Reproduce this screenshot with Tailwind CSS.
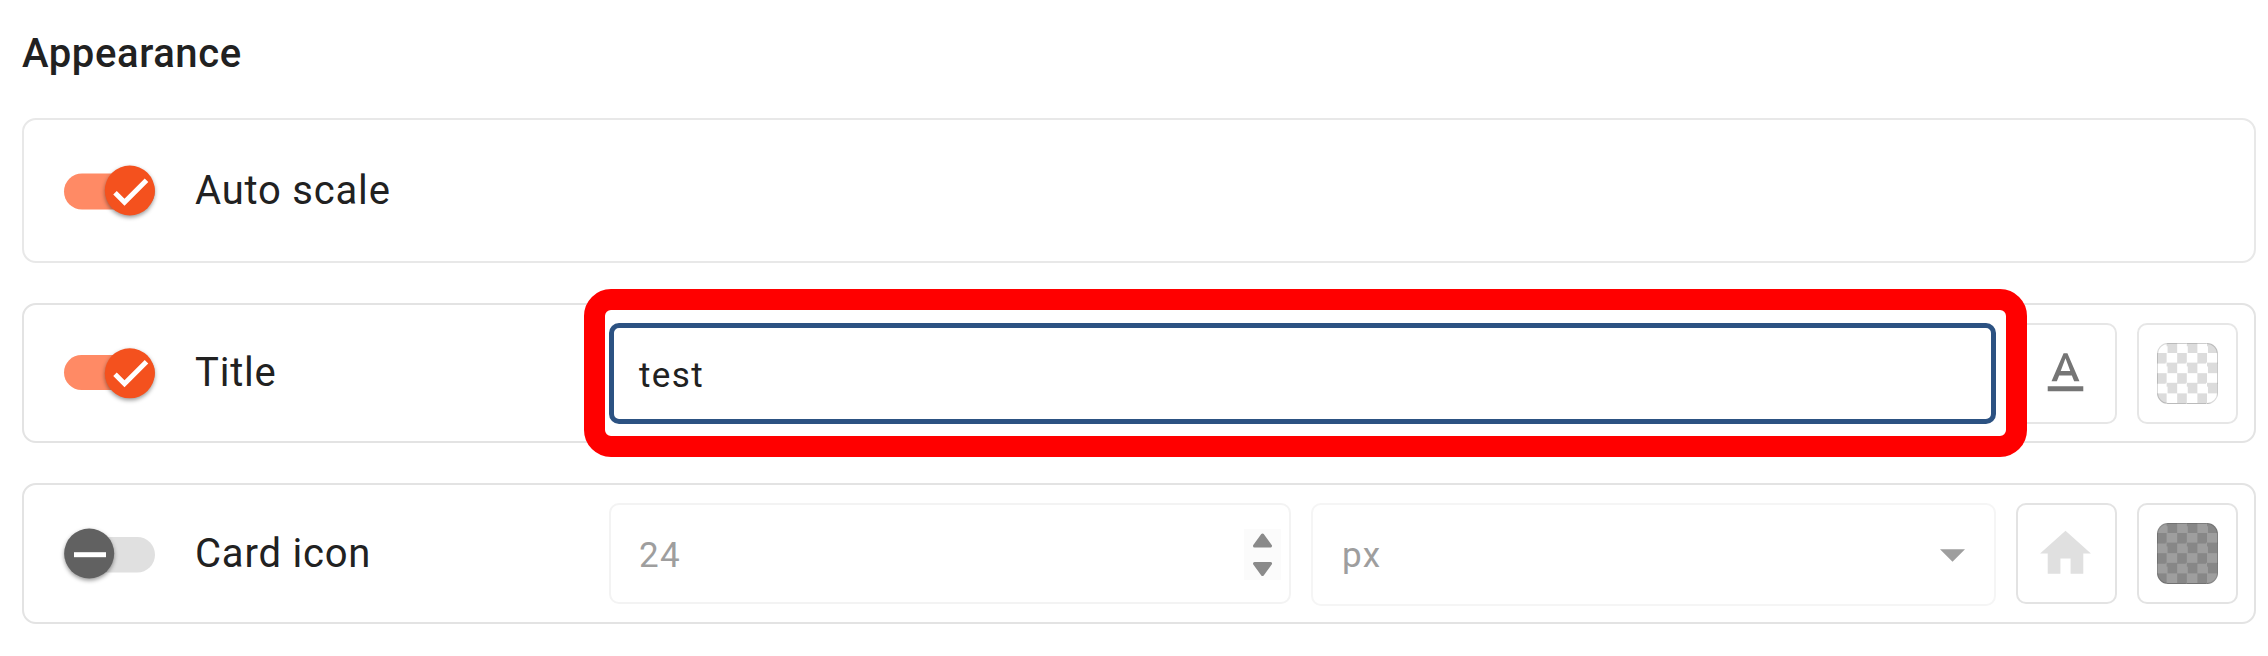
<!DOCTYPE html>
<html lang="en">
<head>
<meta charset="utf-8">
<title>Appearance</title>
<script src="https://cdn.jsdelivr.net/npm/@tailwindcss/browser@4"></script>
</head>
<body class="h-[656px] w-[2268px] overflow-hidden bg-white pl-[22px] font-[Roboto,sans-serif] text-[#212121]">
<h1 class="h-[118px] pt-[30px] text-[40px] leading-[47px] font-medium tracking-[0.6px]">Appearance</h1>
<main class="flex w-[2234px] flex-col">
  <section class="flex h-[145px] items-center rounded-[14px] border-2 border-[#e8e8e8] pl-10">
    <svg class="h-[60px] w-[96px] shrink-0 overflow-visible" viewBox="0 0 96 60">
      <rect x="0" y="12.500" width="91" height="36" rx="18" fill="#ff8a65"/>
      <circle class="drop-shadow-[0_2px_2px_rgba(0,0,0,0.4)]" cx="65.800" cy="29.500" r="25" fill="#f4511e"/>
      <path d="M51 31.700 60.500 41.200 82.500 19.200" fill="none" stroke="#fff" stroke-width="5"/>
    </svg>
    <span class="ml-[35px] text-[40px] leading-[48px] tracking-[0.8px]">Auto scale</span>
  </section>

  <section class="relative mt-10 flex h-[140px] items-center rounded-[14px] border-2 border-[#e3e3e3] pl-10">
    <svg class="h-[60px] w-[96px] shrink-0 overflow-visible" viewBox="0 0 96 60">
      <rect x="0" y="12" width="91" height="35" rx="17.500" fill="#ff8a65"/>
      <circle class="drop-shadow-[0_2px_2px_rgba(0,0,0,0.4)]" cx="65.800" cy="30.300" r="25" fill="#f4511e"/>
      <path d="M51 31.300 60.500 40.800 82.500 18.800" fill="none" stroke="#fff" stroke-width="5"/>
    </svg>
    <span class="ml-[35px] w-[414px] text-[40px] leading-[48px] tracking-[0.8px]">Title</span>
    <div class="flex h-[101px] w-[1387px] items-center rounded-[10px] border-[5px] border-[#2c5282] pt-1 pl-[25px] text-[35px] leading-none tracking-[1.400px]">test</div>
    <div class="ml-5 flex h-[101px] w-[101px] items-center justify-center rounded-[10px] border-2 border-[#e6e6e6] pr-0.5">
      <svg class="size-[61px]" viewBox="0 0 24 24" fill="#757575"><path d="M5 17v2h14v-2H5zm4.500-4.200h5l.9 2.200h2.100L12.750 4h-1.500L6.500 15h2.100l.9-2.200zM12 5.980 13.870 11h-3.740L12 5.980z"/></svg>
    </div>
    <div class="ml-5 flex h-[101px] w-[101px] items-center justify-center rounded-[10px] border-2 border-[#e6e6e6]">
      <div class="size-[61px] rounded-[11px] border border-black/15 bg-[repeating-conic-gradient(#ffffff_0_25%,#dcdcdc_0_50%)] bg-[length:20.200px_20.200px] bg-[position:0_10px] bg-origin-border"></div>
    </div>
    <div class="pointer-events-none absolute top-[-16px] left-[560px] h-[168px] w-[1443px] rounded-[27px] border-[21px] border-[#ff0000]"></div>
  </section>

  <section class="mt-10 flex h-[141px] items-center rounded-[14px] border-2 border-[#e3e3e3] pl-10">
    <svg class="h-[60px] w-[96px] shrink-0 overflow-visible" viewBox="0 0 96 60">
      <rect x="0" y="13" width="91" height="35.500" rx="17.700" fill="#e0e0e0"/>
      <circle class="drop-shadow-[0_2px_2px_rgba(0,0,0,0.4)]" cx="25.200" cy="29.500" r="25" fill="#616161"/>
      <path d="M10 30.700H42" fill="none" stroke="#fff" stroke-width="5"/>
    </svg>
    <span class="ml-[35px] w-[414px] text-[40px] leading-[48px] tracking-[0.8px]">Card icon</span>
    <div class="flex h-[101px] w-[682px] items-center justify-between rounded-[10px] border-2 border-[#f3f3f3] pr-2 pl-7 text-[35px] leading-none tracking-[1.400px] text-[#9e9e9e]"><span class="pt-[3px]">24</span>
      <svg class="mt-px h-[51px] w-[37px] bg-[#fbfbfb]" viewBox="0 0 37 51" fill="#8a8a8a" stroke="#8a8a8a" stroke-width="3" stroke-linejoin="round"><path d="M18.500 6 26.500 17H10.500zM18.500 45.500 26.500 34.500H10.500z"/></svg>
    </div>
    <div class="mt-0.5 ml-5 flex h-[103px] w-[685px] items-center justify-between rounded-[10px] border-2 border-[#f5f5f5] pr-[29px] pl-[29px] text-[35px] leading-none tracking-[1.400px] text-[#9e9e9e]"><span class="pt-0.5">px</span>
      <svg class="mt-0.5 h-[13px] w-[25px]" viewBox="0 0 26 13" fill="#9e9e9e"><path d="M0 0H26L13 13z"/></svg>
    </div>
    <div class="ml-5 flex h-[101px] w-[101px] items-center justify-center rounded-[10px] border-2 border-[#e3e3e3] pr-0.5">
      <svg class="size-[61px]" viewBox="0 0 24 24" fill="#e0e0e0"><path d="M10 20v-6h4v6h5v-8h3L12 3 2 12h3v8z"/></svg>
    </div>
    <div class="ml-5 flex h-[101px] w-[101px] items-center justify-center rounded-[10px] border-2 border-[#e3e3e3]">
      <div class="size-[61px] rounded-[11px] border border-black/15 bg-[repeating-conic-gradient(#9e9e9e_0_25%,#878787_0_50%)] bg-[length:20.200px_20.200px] bg-[position:0_10px] bg-origin-border"></div>
    </div>
  </section>
</main>
</body>
</html>
